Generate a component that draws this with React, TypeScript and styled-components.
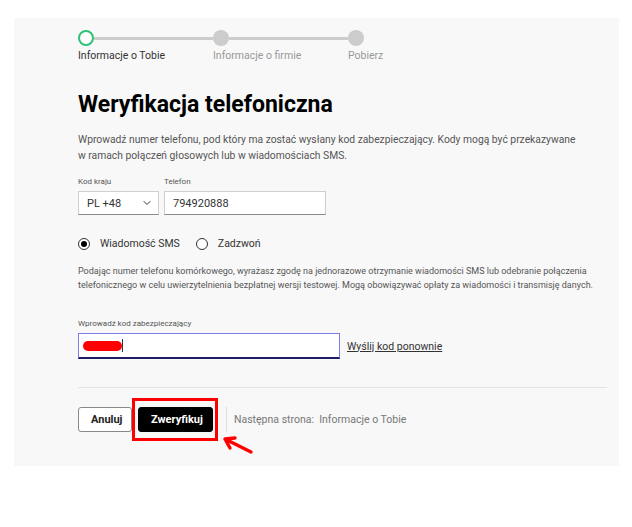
import React from 'react'
import styled, {createGlobalStyle} from 'styled-components'
import {ChevronDown} from 'lucide-react'

const GlobalStyle = createGlobalStyle`
  html, body {
    margin: 0;
    padding: 0;
    background: #ffffff;
    font-family: Roboto, "Liberation Sans", sans-serif;
    color: #333;
  }
`

const Panel = styled.div`
  margin: 18px 0 0 14px;
  width: 605px;
  height: 448px;
  box-sizing: border-box;
  background: #f8f8f8;
  padding: 12px 12px 0 64px;
`

const Stepper = styled.div`
  display: flex;
`
const Step = styled.div<{$last?: boolean}>`
  width: ${p => (p.$last ? 'auto' : '135px')};
  display: flex;
  flex-direction: column;
`
const StepTrack = styled.div`
  display: flex;
  align-items: center;
  height: 16px;
`
const StepDot = styled.div<{$active?: boolean}>`
  width: 16px;
  height: 16px;
  box-sizing: border-box;
  border-radius: 50%;
  flex: none;
  background: ${p => (p.$active ? '#fff' : '#cccccc')};
  border: ${p => (p.$active ? '2px solid #2fc277' : 'none')};
`
const StepLine = styled.div`
  flex: 1;
  height: 3px;
  background: #cccccc;
`
const StepLabel = styled.div<{$active?: boolean}>`
  margin-top: 3px;
  font-size: 10.5px;
  color: ${p => (p.$active ? '#333' : '#999')};
  white-space: nowrap;
`

const Heading = styled.h1`
  margin: 28px 0 0;
  font-size: 23px;
  font-weight: 700;
  color: #000;
  line-height: 30px;
`

const Intro = styled.p`
  margin: 12px 0 0;
  font-size: 10.3px;
  line-height: 16px;
  color: #555;
  width: 500px;
`

const FieldRow = styled.div`
  display: flex;
  gap: 5px;
  margin-top: 13px;
`
const Field = styled.div`
  display: flex;
  flex-direction: column;
`
const FieldLabel = styled.label`
  display: block;
  font-size: 8px;
  color: #555;
  line-height: 10px;
  margin-bottom: 4px;
`
const Box = styled.div<{$w: number}>`
  width: ${p => p.$w}px;
  height: 24px;
  box-sizing: border-box;
  background: #fff;
  border: 1px solid #cfcfcf;
  border-bottom-color: #8a8a8a;
  display: flex;
  align-items: center;
  justify-content: space-between;
  padding: 0 5px 0 8px;
  font-size: 11px;
  color: #333;
`

const RadioRow = styled.div`
  display: flex;
  align-items: center;
  gap: 16px;
  margin-top: 22px;
`
const RadioItem = styled.label`
  display: flex;
  align-items: center;
  gap: 10px;
  font-size: 10.5px;
  color: #333;
`
const RadioCircle = styled.span<{$on?: boolean}>`
  width: 12px;
  height: 12px;
  box-sizing: border-box;
  border-radius: 50%;
  border: 1px solid #333;
  background: #fff;
  display: flex;
  align-items: center;
  justify-content: center;
  &::after {
    content: '';
    width: 6px;
    height: 6px;
    border-radius: 50%;
    background: ${p => (p.$on ? '#000' : 'transparent')};
  }
`

const Consent = styled.p`
  margin: 14px 0 0;
  font-size: 9px;
  line-height: 14px;
  color: #555;
`

const CodeBlock = styled.div`
  margin-top: 27px;
`
const CodeRow = styled.div`
  display: flex;
  align-items: center;
  gap: 7px;
`
const CodeInput = styled.div`
  width: 262px;
  height: 26px;
  box-sizing: border-box;
  background: #fff;
  border: 1px solid #7b7bef;
  border-bottom: 2px solid #1d1d6a;
  display: flex;
  align-items: center;
  padding-left: 4px;
`
const Redacted = styled.span`
  width: 39px;
  height: 10px;
  border-radius: 6px;
  background: #ff0000;
`
const Caret = styled.span`
  width: 1px;
  height: 13px;
  background: #333;
`
const ResendLink = styled.a`
  font-size: 10.5px;
  color: #333;
  text-decoration: underline;
`

const Divider = styled.hr`
  margin: 28px 0 0;
  border: none;
  height: 1px;
  background: #e4e4e4;
`

const Footer = styled.div`
  display: flex;
  align-items: center;
  margin-top: 10px;
`
const Button = styled.button<{$primary?: boolean}>`
  height: 25px;
  box-sizing: border-box;
  padding: 0 12px;
  border-radius: 3px;
  font-family: inherit;
  font-size: 11px;
  font-weight: 700;
  cursor: pointer;
  background: ${p => (p.$primary ? '#000' : '#fff')};
  color: ${p => (p.$primary ? '#fff' : '#222')};
  border: 1px solid ${p => (p.$primary ? '#000' : '#888')};
  width: ${p => (p.$primary ? '75px' : '54px')};
`
const Annotation = styled.div`
  position: relative;
  border: 3px solid #ff0000;
  padding: 6px 2px 6px 3px;
  display: flex;
`
const Arrow = styled.svg`
  position: absolute;
  left: 86px;
  top: 33px;
`
const Separator = styled.div`
  width: 1px;
  height: 25px;
  background: #dddddd;
  margin: 0 7px 0 8px;
`
const NextPage = styled.span`
  font-size: 10.5px;
  color: #777;
  white-space: pre;
`

const steps = ['Informacje o Tobie', 'Informacje o firmie', 'Pobierz']

export default function App() {
  return (
    <>
      <GlobalStyle />
      <Panel>
        <Stepper>
          {steps.map((s, i) => (
            <Step key={s} $last={i === steps.length - 1}>
              <StepTrack>
                <StepDot $active={i === 0} />
                {i < steps.length - 1 && <StepLine />}
              </StepTrack>
              <StepLabel $active={i === 0}>{s}</StepLabel>
            </Step>
          ))}
        </Stepper>

        <Heading>Weryfikacja telefoniczna</Heading>
        <Intro>
          Wprowadź numer telefonu, pod który ma zostać wysłany kod zabezpieczający. Kody mogą być
          przekazywane w ramach połączeń głosowych lub w wiadomościach SMS.
        </Intro>

        <FieldRow>
          <Field>
            <FieldLabel>Kod kraju</FieldLabel>
            <Box $w={81}>
              PL +48
              <ChevronDown size={12} strokeWidth={2} color="#333" />
            </Box>
          </Field>
          <Field>
            <FieldLabel>Telefon</FieldLabel>
            <Box $w={162}>794920888</Box>
          </Field>
        </FieldRow>

        <RadioRow>
          <RadioItem>
            <RadioCircle $on />
            Wiadomość SMS
          </RadioItem>
          <RadioItem>
            <RadioCircle />
            Zadzwoń
          </RadioItem>
        </RadioRow>

        <Consent>
          Podając numer telefonu komórkowego, wyrażasz zgodę na jednorazowe otrzymanie wiadomości SMS lub
          odebranie połączenia telefonicznego w celu uwierzytelnienia bezpłatnej wersji testowej. Mogą
          obowiązywać opłaty za wiadomości i transmisję danych.
        </Consent>

        <CodeBlock>
          <FieldLabel>Wprowadź kod zabezpieczający</FieldLabel>
          <CodeRow>
            <CodeInput>
              <Redacted />
              <Caret />
            </CodeInput>
            <ResendLink href="#">Wyślij kod ponownie</ResendLink>
          </CodeRow>
        </CodeBlock>

        <Divider />

        <Footer>
          <Button>Anuluj</Button>
          <Annotation>
            <Button $primary>Zweryfikuj</Button>
            <Arrow width="34" height="22" viewBox="0 0 34 22">
              <path
                d="M30 18 L4 5 M4 5 L14 4 M4 5 L9 14"
                fill="none"
                stroke="#ff0000"
                strokeWidth="3.4"
                strokeLinecap="round"
                strokeLinejoin="round"
              />
            </Arrow>
          </Annotation>
          <Separator />
          <NextPage>Następna strona:  Informacje o Tobie</NextPage>
        </Footer>
      </Panel>
    </>
  )
}
